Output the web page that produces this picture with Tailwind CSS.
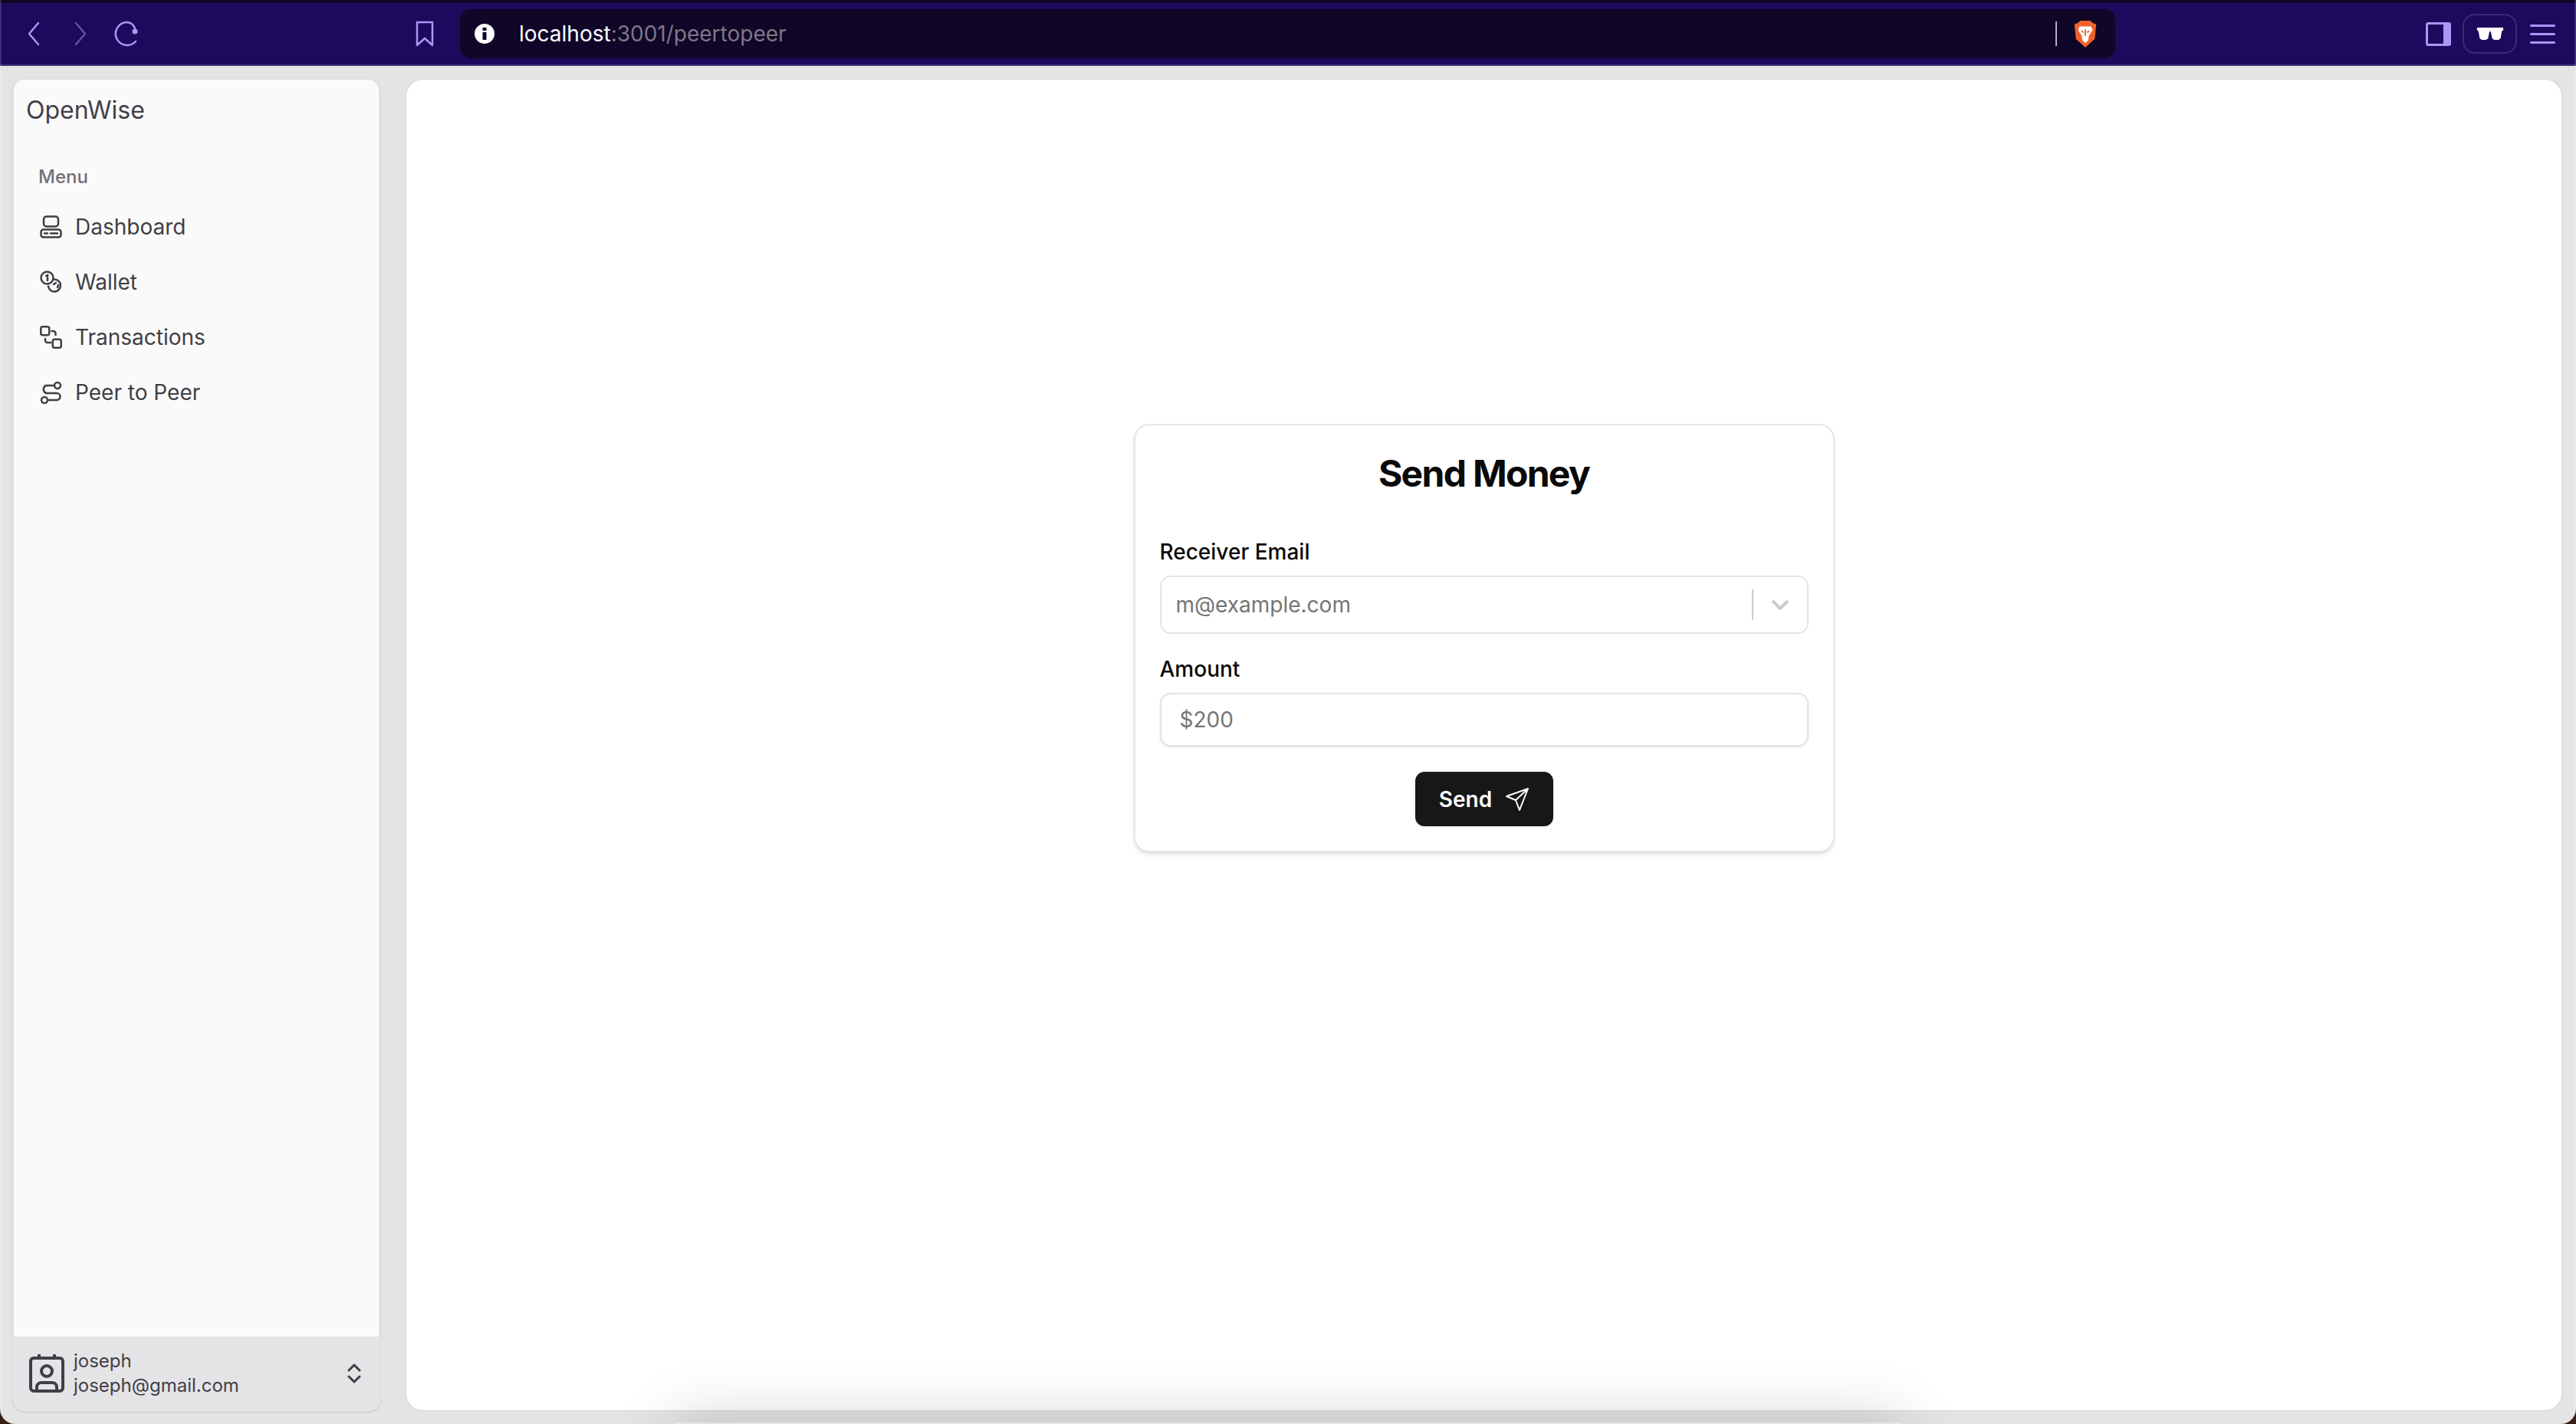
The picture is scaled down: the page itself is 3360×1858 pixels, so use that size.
<!DOCTYPE html>
<html lang="en">
<head>
    <meta charset="UTF-8">
    <title>OpenWise</title>
    <script src="https://cdn.jsdelivr.net/npm/@tailwindcss/browser@4"></script>
</head>
<body class="bg-[#3a1f14] font-['Inter',sans-serif] overflow-hidden">
<div class="relative h-screen flex flex-col bg-[#e4e4e4] rounded-b-[20px] overflow-hidden">

    <!-- browser toolbar -->
    <header class="h-[86px] shrink-0 flex items-center bg-[#1e0a5c] border-t-[4px] border-t-[#0f0628] border-b-[2px] border-b-[#3f2d78] text-[#a996f5]">
        <div class="w-[600px] shrink-0 flex items-center h-full">
            <svg class="ml-[35px] w-[18px] h-[32px]" viewBox="0 0 18 32" fill="none" stroke="currentColor" stroke-width="2.500" stroke-linecap="round" stroke-linejoin="round"><path d="M15 2 3 16l12 14"/></svg>
            <svg class="ml-[43px] w-[18px] h-[32px] opacity-50" viewBox="0 0 18 32" fill="none" stroke="currentColor" stroke-width="2.500" stroke-linecap="round" stroke-linejoin="round"><path d="m3 2 12 14L3 30"/></svg>
            <svg class="ml-[32px] w-[36px] h-[34px]" viewBox="0 0 36 34" fill="none" stroke="currentColor" stroke-width="2.500" stroke-linecap="round"><path d="M19 2A15 15 0 1 0 31 27"/><path d="M19 2c5 0 9 3 11 8"/><circle cx="30" cy="14" r="3.500" fill="currentColor" stroke="none"/></svg>
            <svg class="ml-[360px] w-[24px] h-[34px]" viewBox="0 0 24 34" fill="none" stroke="currentColor" stroke-width="2.500" stroke-linejoin="round"><path d="M2 2h20v30l-10-9-10 9z"/></svg>
        </div>
        <div class="w-[2159px] shrink-0 h-[64px] flex items-center rounded-[14px] bg-[#0f0628] text-[28px]">
            <svg class="ml-[19px] w-[26px] h-[26px]" viewBox="0 0 26 26"><circle cx="13" cy="13" r="13" fill="#fff"/><rect x="10.500" y="11" width="5" height="10" fill="#0f0628"/><rect x="10.500" y="5" width="5" height="4" fill="#0f0628"/></svg>
            <p class="ml-[32px]"><span class="text-white">localhost</span><span class="text-[#7d7885]">:3001/peertopeer</span></p>
            <div class="ml-auto w-[2px] h-[32px] bg-[#b5b2bd]"></div>
            <svg class="ml-[21px] mr-[23px] w-[32px] h-[36px]" viewBox="0 0 32 38"><path d="M9 1h14l3 3 5 2-2 20-13 12L3 26 1 6l5-2z" fill="#f0622a"/><path d="M8 9h16l2 5-5 8-1 6-4 4-4-4-1-6-5-8z" fill="#fff"/><path d="M15 13h2v9h-2zM10 14l4 2v2l-3-1zM22 14l-4 2v2l3-1z" fill="#f0622a"/></svg>
        </div>
        <div class="flex-1 flex items-center">
            <svg class="ml-[405px] w-[33px] h-[31px]" viewBox="0 0 33 31"><rect x="1.500" y="1.500" width="30" height="28" rx="2" fill="none" stroke="#a996f5" stroke-width="3"/><rect x="23" y="1" width="10" height="29" fill="#a996f5"/></svg>
            <div class="ml-[15px] w-[71px] h-[52px] rounded-[16px] border-[2px] border-[#3b2a75] flex items-center justify-center">
                <svg class="w-[36px] h-[18px]" viewBox="0 0 38 20" fill="#fff"><path d="M0 1h38v4l-2 1-2 11-3 2h-6l-3-2-2-10h-2l-2 10-3 2H7l-3-2L2 6 0 5z"/></svg>
            </div>
            <div class="ml-[17px] w-[33px] flex flex-col gap-[8px]">
                <div class="h-[3px] rounded-full bg-[#a996f5]"></div>
                <div class="h-[3px] rounded-full bg-[#a996f5]"></div>
                <div class="h-[3px] rounded-full bg-[#a996f5]"></div>
            </div>
        </div>
    </header>

    <div class="flex-1 min-h-0 flex gap-[32px] pt-[16px] pb-[16px] pl-[16px] pr-[17px]">
        <!-- sidebar -->
        <aside class="w-[480px] shrink-0 flex flex-col rounded-[16px] bg-[#fafafa] border-[2px] border-[#e2e2e6] text-[#3f3f46] overflow-hidden shadow-sm">
            <div class="flex-1">
                <p class="ml-[16px] mt-[16px] text-[32px] leading-[48px]">OpenWise</p>
                <p class="ml-[32px] mt-[47px] text-[24px] leading-[32px] font-medium text-[#71717a]">Menu</p>
                <nav class="mt-[13px] ml-[34px] flex flex-col text-[28px]">
                    <a class="h-[72px] flex items-center gap-[17px]">
                        <svg class="w-[29px] h-[30px]" viewBox="0 0 29 30" fill="none" stroke="currentColor" stroke-width="2.500"><rect x="5" y="1.500" width="19" height="13" rx="3.500"/><rect x="1.500" y="18.500" width="26" height="10" rx="3"/><path d="M6 23.500h4M14 23.500h9" stroke-linecap="round"/></svg>
                        Dashboard
                    </a>
                    <a class="h-[72px] flex items-center gap-[17px]">
                        <svg class="w-[29px] h-[30px]" viewBox="0 0 29 30" fill="none" stroke="currentColor" stroke-width="2.500" stroke-linecap="round"><circle cx="9.500" cy="9.500" r="8"/><path d="M8 7l2-1v7"/><path d="M19 11.500a8 8 0 1 1-8 9"/><path d="M18 18l3-2M24 19l-1 3"/></svg>
                        Wallet
                    </a>
                    <a class="h-[72px] flex items-center gap-[17px]">
                        <svg class="w-[29px] h-[30px]" viewBox="0 0 29 30" fill="none" stroke="currentColor" stroke-width="2.500" stroke-linecap="round" stroke-linejoin="round"><rect x="1.250" y="1.250" width="11" height="11" rx="2.500"/><rect x="16.750" y="17.750" width="11" height="11" rx="2.500"/><path d="M15.500 7h2a3 3 0 0 1 3 3v2"/><path d="M7 17v2a3 3 0 0 0 3 3h4"/></svg>
                        Transactions
                    </a>
                    <a class="h-[72px] flex items-center gap-[17px]">
                        <svg class="w-[29px] h-[30px]" viewBox="0 0 29 30" fill="none" stroke="currentColor" stroke-width="2.500" stroke-linecap="round"><circle cx="23" cy="6" r="4"/><circle cx="6" cy="25" r="4"/><path d="M19 6H8a5.500 5.500 0 0 0 0 10h14a4.500 4.500 0 0 1 0 9H10"/></svg>
                        Peer to Peer
                    </a>
                </nav>
            </div>
            <div class="h-[96px] shrink-0 flex items-center bg-[#e4e4e7] pl-[20px] pr-[23px]">
                <svg class="w-[46px] h-[50px]" viewBox="0 0 46 50" fill="none" stroke="currentColor" stroke-width="4" stroke-linejoin="round"><rect x="2" y="5" width="42" height="43" rx="4"/><path d="M13 1v4M33 1v4" stroke-linecap="round"/><circle cx="23" cy="22" r="7"/><path d="M10 47v-4a6 6 0 0 1 6-6h14a6 6 0 0 1 6 6v4"/></svg>
                <div class="ml-[12px] flex-1 text-[24px] leading-[32px]">
                    <p>joseph</p>
                    <p>joseph@gmail.com</p>
                </div>
                <svg class="w-[18px] h-[26px]" viewBox="0 0 18 26" fill="none" stroke="currentColor" stroke-width="3" stroke-linecap="round" stroke-linejoin="round"><path d="m2 9 7-7 7 7M2 17l7 7 7-7"/></svg>
            </div>
        </aside>

        <!-- main panel -->
        <main class="flex-1 flex justify-center pt-[449px] rounded-[24px] bg-white border-[2px] border-[#dedee0]">
            <form class="w-[914px] h-[559px] flex flex-col rounded-[20px] border-[2px] border-[#e5e5e5] shadow-md px-[32px] pt-[35px]">
                <h1 class="text-center text-[48px] leading-[56px] font-bold tracking-[-1.700px] text-[#0a0a0a]">Send Money</h1>
                <label class="mt-[54px] text-[28px] leading-[40px] font-medium text-[#0a0a0a]">Receiver Email</label>
                <div class="mt-[11px] h-[76px] flex items-center rounded-[14px] border-[2px] border-[#e5e5e5] pl-[19px] text-[28px] text-[#757575]">
                    <span class="flex-1">m@example.com</span>
                    <div class="w-[2px] h-[40px] bg-[#cccccc]"></div>
                    <svg class="mx-[23px] w-[24px] h-[14px]" viewBox="0 0 24 14" fill="none" stroke="#cccccc" stroke-width="4"><path d="m2 2 10 10L22 2"/></svg>
                </div>
                <label class="mt-[26px] text-[28px] leading-[40px] font-medium text-[#0a0a0a]">Amount</label>
                <div class="mt-[11px] h-[70px] flex items-center rounded-[14px] border-[2px] border-[#e5e5e5] shadow-sm pl-[24px] text-[28px] text-[#757575]">$200</div>
                <button type="button" class="mt-[33px] self-center w-[180px] h-[71px] flex items-center justify-center gap-[18px] rounded-[12px] bg-[#171717] shadow-sm text-[28px] font-semibold text-white">
                    Send
                    <svg class="w-[30px] h-[30px]" viewBox="0 0 30 30" fill="none" stroke="currentColor" stroke-width="2" stroke-linecap="round" stroke-linejoin="round"><path d="M29 1 1 11l12 5 5 13zM13 16 29 1"/></svg>
                </button>
            </form>
        </main>
    </div>

    <!-- dock shadow along the bottom edge -->
    <div class="absolute left-[880px] bottom-[-50px] w-[1600px] h-[52px] shadow-[0_0_80px_0_rgba(0,0,0,0.22)]"></div>
    <!-- window edge highlight -->
    <div class="absolute inset-0 pointer-events-none rounded-b-[20px] border-x-[2px] border-white/15"></div>
</div>
</body>
</html>
